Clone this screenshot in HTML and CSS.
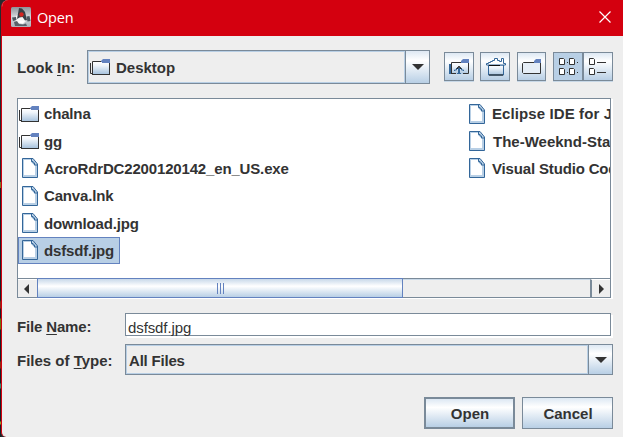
FILE: index.html
```
<!DOCTYPE html>
<html lang="en">
<head>
<meta charset="utf-8">
<title>Open</title>
<link rel="stylesheet" href="styles.css">
</head>
<body>
<svg width="0" height="0" class="defs">
  <defs>
    <linearGradient id="steel" x1="0" y1="0" x2="0" y2="1"><stop offset="0" stop-color="#fff"/><stop offset=".3" stop-color="#eef4fa"/><stop offset="1" stop-color="#a9c4de"/></linearGradient>
    <linearGradient id="metal" x1="0" y1="0" x2="0" y2="1"><stop offset="0" stop-color="#8d9399"/><stop offset=".5" stop-color="#d5d9dc"/><stop offset="1" stop-color="#a9b1b9"/></linearGradient>
    <symbol id="folder" viewBox="0 0 21 18"><path d="M2 4h18v12H2z" fill="url(#steel)"/><path d="M.5 5v10.500H3M2.500 16V3.500H12M2 16.500h18M19.500 4v13" fill="none" stroke="#333"/><path d="M11 4V3l2-2h7v4h-8V4z" fill="#6382bf"/></symbol>
    <symbol id="file" viewBox="0 0 16 20"><path d="M.5.5H11L15.500 6v13.500H.5z" fill="#b8cfe5" stroke="#336699"/><path d="M2 2h7v2l4 4v9H2z" fill="#fff"/><path d="M9.500 1v2.500h1.500V5h1.500v2H15" fill="none" stroke="#336699"/></symbol>
  </defs>
</svg>
<div class="screen">
  <div class="backdrop"></div>
  <main class="window">
    <header class="title">
      <svg class="duke" viewBox="0 0 20 20"><rect width="20" height="20" rx="1.500" fill="url(#metal)"/><path d="M5 9l5-3 4 3 1 5-3 3-6-1-2-3z" fill="#f7f7f7"/><path d="M8 1l3 .5 3 3.500 2 8-2 .5-2.500-3.500-3 .5L6 12z" fill="#3a4046"/><path d="M1 10.500l4-.5.5 3L2 14zM15.500 9.500l3-.5 1 5-3 .5z" fill="#4c565e"/><path d="M3 15l3-1 2 3 4 .5 3-1 1 2.500H4z" fill="#596169"/><path d="M8 14h5l-1 2H9z" fill="#fff"/><circle cx="10.500" cy="7.500" r="2.200" fill="#d52521"/></svg>
      <h1>Open</h1>
      <svg class="close" viewBox="0 0 12 12"><path d="M.5.5l11 11M11.500.5l-11 11" stroke="#fff" stroke-width="1.200"/></svg>
    </header>
    <section class="look">
      <label>Look <u>I</u>n:</label>
      <div class="combo">
        <div class="value"><svg class="folder"><use href="#folder"/></svg><span>Desktop</span></div>
        <div class="drop"><i></i></div>
      </div>
      <div class="tools">
        <div class="tool"><svg viewBox="0 0 28 28"><path d="M5 10h18v11H5z" fill="url(#steel)"/><path d="M6.500 20.500V9.500H17M23.500 9v11.500H18M6 20.500h5" fill="none" stroke="#333"/><path d="M5 11v10" stroke="#336699" stroke-width="2"/><path d="M16 10V8l2-2h6v4z" fill="#6382bf"/><path d="M13 15h2v5h1v1h-4v-1h1z" fill="#336699"/><path d="M9.500 18v-1h2v-1.500h5V17h2v1" fill="none" stroke="#336699"/><path d="M11.500 15.500h1v-1h1v-1h1v1h1v1h1" fill="none" stroke="#111"/></svg></div>
        <div class="tool"><svg viewBox="0 0 28 28"><path d="M7.500 12h15v10h-15z" fill="url(#steel)" stroke="#336699"/><path d="M5.500 12V10.500h2v-1h2v-1h2v-1h2v-2h3v2h2v1h2v-3h2v5h2V12z" fill="#fff" stroke="#336699"/><path d="M8 12.500h11M8 22h14" stroke="#111"/></svg></div>
        <div class="tool"><svg viewBox="0 0 28 28"><path d="M4.500 19.500v-9l1-1H22.500v11h-17z" fill="#e6eef6" stroke="#333"/><path d="M16 10V8l2-2h5v4z" fill="#6382bf"/></svg></div>
        <div class="tool on"><svg viewBox="0 0 28 28"><g fill="#fff" stroke="#333"><path d="M5.500 5.500h4l1 1v5h-5zM15.500 5.500h4l1 1v5h-5zM5.500 15.500h4l1 1v5h-5zM15.500 15.500h4l1 1v5h-5z"/></g><path d="M13 9.500h1M23 9.500h1M13 19.500h1M23 19.500h1" stroke="#333"/></svg></div>
        <div class="tool"><svg viewBox="0 0 28 28"><path d="M5.500 5.500h4l1 1v5h-5zM5.500 15.500h4l1 1v5h-5z" fill="#fff" stroke="#333"/><path d="M13 9.500h9M13 19.500h9" stroke="#333"/></svg></div>
      </div>
    </section>
    <section class="list">
      <div class="files">
        <ul>
          <li><svg class="folder"><use href="#folder"/></svg><span>chalna</span></li>
          <li><svg class="folder"><use href="#folder"/></svg><span>gg</span></li>
          <li><svg class="file"><use href="#file"/></svg><span>AcroRdrDC2200120142_en_US.exe</span></li>
          <li><svg class="file"><use href="#file"/></svg><span>Canva.lnk</span></li>
          <li><svg class="file"><use href="#file"/></svg><span>download.jpg</span></li>
          <li class="selected"><svg class="file"><use href="#file"/></svg><span>dsfsdf.jpg</span></li>
        </ul>
        <ul class="more">
          <li class="wide"><svg class="file"><use href="#file"/></svg><span>Eclipse IDE for Ja</span></li>
          <li class="wide weeknd"><svg class="file"><use href="#file"/></svg><span>The-Weeknd-Sta</span></li>
          <li><svg class="file"><use href="#file"/></svg><span>Visual Studio Cod</span></li>
        </ul>
      </div>
      <div class="scroll">
        <div class="arrow left"><i></i></div>
        <div class="thumb"><i></i></div>
        <div class="arrow right"><i></i></div>
      </div>
    </section>
    <section class="row name"><label>File <u>N</u>ame:</label><div class="field"><span>dsfsdf.jpg</span></div></section>
    <section class="row type"><label>Files of <u>T</u>ype:</label>
      <div class="combo"><div class="value"><span>All Files</span></div><div class="drop"><i></i></div></div></section>
    <footer><button class="primary">Open</button><button>Cancel</button></footer>
  </main>
</div>
</body>
</html>
```
FILE: styles.css
```
* { box-sizing: border-box; }
body { margin: 0; overflow: hidden; font: bold 15px "Liberation Sans", Arial, sans-serif; color: #333; letter-spacing: -.16px; }
svg { display: block; flex: none; }
.defs { position: absolute; }
u { text-decoration-thickness: 1px; text-underline-offset: 2px; text-decoration-skip-ink: none; }
.screen { display: flex; width: 623px; height: 437px; background: #252a2d; }
.backdrop { width: 1px; background: linear-gradient(#252a2d 0 182px, #777b22 182px 188px, #182025 188px 300px, #862b16 302px 308px, #182025 309px 318px, #667510 319px 329px, #182025 330px 361px, #8b2c12 362px 368px, #182025 369px 383px, #368d70 384px 388px, #182025 389px 421px, #9a9d24 422px 424px, #182025 425px); }
.window { flex: 1; min-width: 0; background: #eee; border-left: 1px solid #d4000f; border-radius: 7px 0 0 5px; overflow: hidden; }
.title { height: 36px; background: #d4000f; color: #fff; display: flex; align-items: center; padding: 0 12px 0 9px; }
.duke { width: 20px; height: 20px; margin-top: -2px; }
h1 { margin: -2px auto 0 6px; font: 14.500px "Open Sans", sans-serif; letter-spacing: -.2px; }
.close { width: 12px; height: 12px; margin-top: -2px; }
.look { display: flex; height: 34px; margin: 14px 10px 0 15px; }
.look label { width: 70px; line-height: 36px; letter-spacing: 0; }
.combo { display: flex; border: 1px solid #7a8a99; height: 34px; width: 343px; letter-spacing: 0; }
.value { flex: 1; border: 1px solid #b8cfe5; display: flex; align-items: center; padding-left: 1px; }
.value .folder { margin-right: 5px; }
.drop { width: 24px; border-left: 1px solid #7a8a99; background: linear-gradient(#dde8f3, #fff 30%, #b8cfe5); display: flex; align-items: center; justify-content: center; }
.drop i { border: 6.5px solid transparent; border-top: 6px solid #333; border-bottom: 0; }
.folder { width: 21px; height: 18px; }
.tools { display: flex; margin: 2px 0 0 14px; }
.tool { width: 30px; height: 29px; border: 1px solid #7a8a99; background: linear-gradient(#dde8f3, #fff 30%, #b8cfe5); box-shadow: 0 1px #c8d8e7; margin-right: 6px; overflow: hidden; }
.tool:nth-child(2) { margin-right: 7px; }
.tool:nth-child(3) { width: 29px; margin-right: 7px; }
.tool.on { background: #b8cfe5; margin-right: 0; }
.tool:last-child { margin-right: 0; }
.tool svg { width: 28px; height: 28px; }
.list { width: 594px; height: 200px; margin: 14px 0 0 15px; border: 1px solid #7a8a99; box-shadow: 2px 1px #fff; background: #fff; display: flex; flex-direction: column; }
.files { display: flex; height: 179px; padding-top: 1px; overflow: hidden; }
ul { list-style: none; margin: 0; padding: 0; width: 447px; flex: none; }
li { display: flex; align-items: center; height: 27.400px; padding-left: 1px; width: max-content; white-space: nowrap; }
li .folder { margin-right: 4px; }
li .file { width: 16px; height: 20px; margin: 0 6px 0 3px; }
.more .file { margin-right: 7px; }
.more .weeknd .file { margin-right: 8px; }
.wide { letter-spacing: .1px; }
.weeknd { letter-spacing: 0; }
.selected { width: 102px; height: 27px; background: #b8cfe5; box-shadow: inset 0 0 0 1px #6382bf; }
.scroll { display: flex; height: 19px; border-top: 1px solid #7a8a99; background: #eee; box-shadow: inset 0 1px #c8d8e7; }
.arrow { width: 19px; display: flex; align-items: center; justify-content: center; background: #eee; border-top: 1px solid #fff; }
.left i { border: 5px solid transparent; border-right-color: #333; border-left: 0; margin-right: 3px; }
.right { width: 20px; margin-left: auto; border-left: 2px solid #7a8a99; }
.right i { border: 5px solid transparent; border-left-color: #333; border-right: 0; }
.thumb { width: 366px; height: 20px; margin-top: -1px; flex: none; border: 1px solid #6382bf; background: linear-gradient(#c8d8e9, #fff 40%, #b8cfe5); display: flex; align-items: center; justify-content: center; }
.thumb i { width: 7px; height: 11px; border: solid #6382bf; border-width: 0 1px; background: linear-gradient(90deg, transparent 2px, #6382bf 2px 3px, transparent 3px); }
.row { display: flex; margin: 15px 0 0 15px; }
.row label { width: 108px; white-space: nowrap; }
.name label { line-height: 27px; }
.field { width: 486px; height: 23px; border: 1px solid #7a8a99; box-shadow: 2px 2px #fff; background: #fff; font-weight: normal; line-height: 27px; padding-left: 2px; letter-spacing: -.1px; }
.name { height: 23px; }
.type { margin-top: 8px; height: 31px; }
.type label { line-height: 34px; letter-spacing: 0; }
.type .combo { width: 488px; height: 31px; letter-spacing: -.2px; }
.type .value { padding: 2px 0 0 2px; }
footer { display: flex; justify-content: flex-end; gap: 7px; margin: 22px 10px 0 0; }
button { width: 91px; height: 32px; border: 1px solid #7a8a99; background: linear-gradient(#dde8f3, #fff 30%, #b8cfe5); font: inherit; color: inherit; letter-spacing: 0; padding: 1px 0 0 1px; }
.primary { border-width: 2px; }
```
